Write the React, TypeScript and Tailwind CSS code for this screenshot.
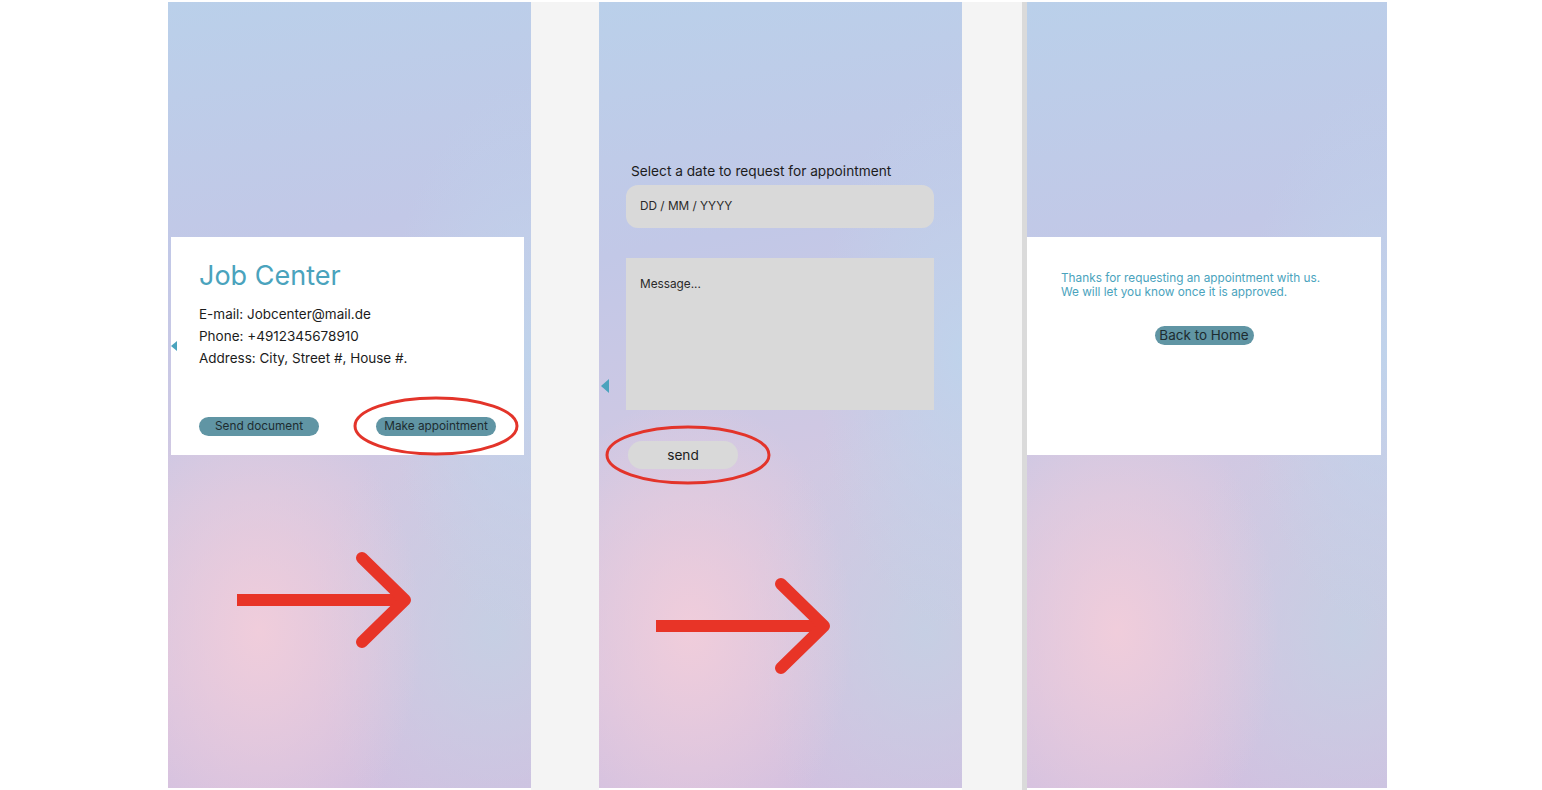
import React from "react";

const panelBg =
  "bg-[radial-gradient(ellipse_45%_30%_at_25%_80%,rgba(240,205,219,1)_0%,rgba(240,205,219,0)_100%),radial-gradient(ellipse_40%_35%_at_100%_45%,rgba(190,212,236,0.9)_0%,rgba(190,212,236,0)_100%),radial-gradient(ellipse_50%_30%_at_90%_80%,rgba(196,208,228,0.9)_0%,rgba(196,208,228,0)_100%),linear-gradient(170deg,#bad0ea_0%,#c2c8e7_30%,#d2c8e2_60%,#d6c4e0_80%,#d1bfe0_100%)]";

function Arrow({ className }: { className: string }) {
  return (
    <svg className={className} width="190" height="100" viewBox="0 0 190 100" fill="none">
      <path d="M8 50 H172" stroke="#e83427" strokeWidth="12" />
      <path d="M133 8 L176 50 L133 92" stroke="#e83427" strokeWidth="12" strokeLinecap="round" strokeLinejoin="round" />
    </svg>
  );
}

function Ellipse({ className }: { className: string }) {
  return (
    <svg className={className} width="168" height="62" viewBox="0 0 168 62" fill="none">
      <ellipse cx="84" cy="31" rx="81" ry="28" stroke="#e3342a" strokeWidth="3" />
    </svg>
  );
}

function Tri({ className }: { className: string }) {
  return <div className={className} />;
}

export default function App() {
  return (
    <div className="min-h-[790px] w-[1542px] bg-white font-['Inter','Noto_Sans',sans-serif]">
      <div className="flex pl-[168px] pt-[2px]">
        {/* Panel 1 */}
        <div className={`relative h-[786px] w-[363px] ${panelBg}`}>
          <div className="ml-[3px] mr-[7px] mt-[235px] flex h-[218px] flex-col bg-white px-7 pt-[22px]">
            <h1 className="text-[27px] leading-[34px] text-[#4aa3bd]">Job Center</h1>
            <div className="mt-[10px] flex flex-col text-[13.5px] leading-[22px] text-[#1c1c1c]">
              <span>E-mail: Jobcenter@mail.de</span>
              <span>Phone: +4912345678910</span>
              <span>Address: City, Street #, House #.</span>
            </div>
            <div className="mt-[48px] flex justify-between">
              <button className="h-[19px] w-[120px] rounded-full bg-[#6095a4] text-[11.8px] leading-[19px] text-[#1d2c30]">
                Send document
              </button>
              <button className="h-[19px] w-[120px] rounded-full bg-[#6095a4] text-[11.8px] leading-[19px] text-[#1d2c30]">
                Make appointment
              </button>
            </div>
          </div>
          <Tri className="absolute left-[3px] top-[339px] h-0 w-0 border-y-[5px] border-r-[6px] border-y-transparent border-r-[#4aa3bd]" />
          <Ellipse className="absolute left-[184px] top-[393px]" />
          <Arrow className="absolute left-[61px] top-[548px]" />
        </div>

        <div className="h-[788px] w-[68px] bg-[#f4f4f4]" />

        {/* Panel 2 */}
        <div className={`relative h-[786px] w-[363px] ${panelBg}`}>
          <div className="flex flex-col pl-[27px] pr-[28px] pt-[160px]">
            <label className="pl-[5px] text-[13.7px] leading-[18px] text-[#1c1c1c]">
              Select a date to request for appointment
            </label>
            <div className="mt-[5px] flex h-[43px] items-center rounded-[12px] bg-[#d9d9d9] pl-[14px] text-[11.8px] text-[#2a2a2a]">
              DD / MM / YYYY
            </div>
            <div className="mt-[30px] h-[152px] bg-[#d9d9d9] pl-[14px] pt-[18px] text-[11.8px] leading-[16px] text-[#2a2a2a]">
              Message...
            </div>
            <button className="ml-[2px] mt-[31px] h-[28px] w-[110px] rounded-full bg-[#d9d9d9] text-[13.7px] text-[#1c1c1c]">
              send
            </button>
          </div>
          <Tri className="absolute left-[2px] top-[377px] h-0 w-0 border-y-[7px] border-r-[8px] border-y-transparent border-r-[#4aa3bd]" />
          <Ellipse className="absolute left-[5px] top-[422px]" />
          <Arrow className="absolute left-[49px] top-[574px]" />
        </div>

        <div className="h-[788px] w-[60px] bg-[#f4f4f4]" />
        <div className="h-[788px] w-[5px] bg-[#dadada]" />

        {/* Panel 3 */}
        <div className={`relative h-[786px] w-[360px] ${panelBg}`}>
          <div className="mr-[6px] mt-[235px] flex h-[218px] flex-col bg-white pt-[34px]">
            <p className="pl-[34px] text-[11.8px] leading-[14px] text-[#4aa3bd]">
              Thanks for requesting an appointment with us.
              <br />
              We will let you know once it is approved.
            </p>
            <div className="mt-[27px] flex justify-center">
              <button className="h-[19px] w-[99px] rounded-full bg-[#6095a4] text-[13.5px] leading-[19px] text-[#1d2c30]">
                Back to Home
              </button>
            </div>
          </div>
        </div>
      </div>
    </div>
  );
}
